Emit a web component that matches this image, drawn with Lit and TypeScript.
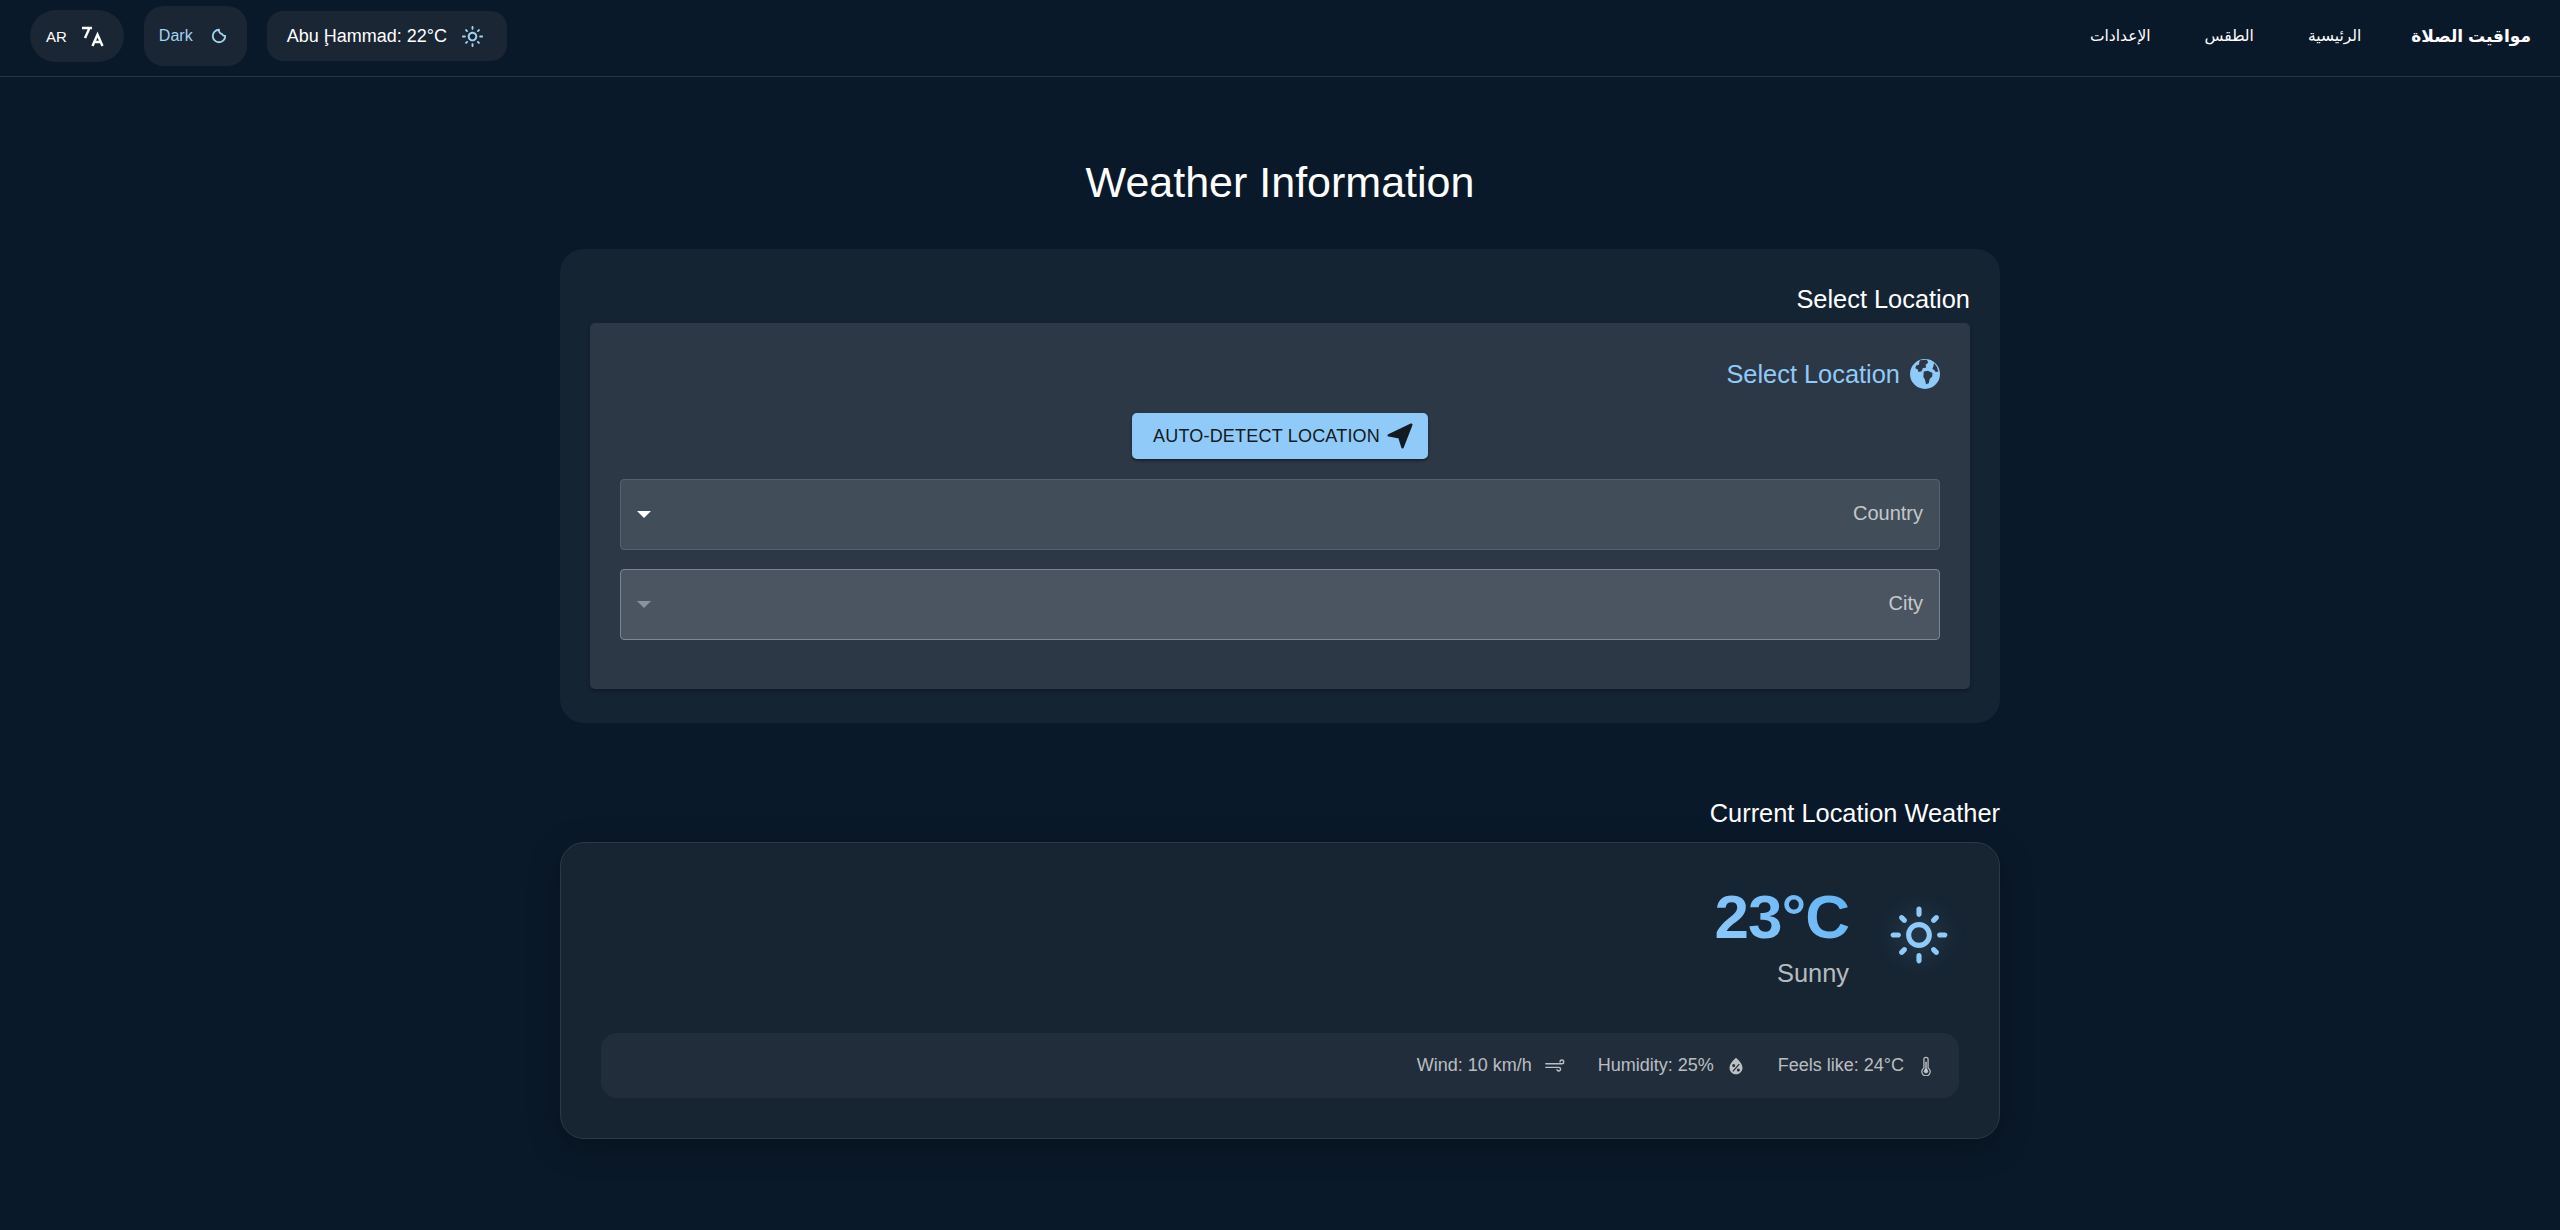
import { LitElement, html, css, svg } from "lit";
import { customElement } from "lit/decorators.js";

const icon = (d: unknown, size: number, cls = "") =>
  html`<svg class=${cls} width=${size} height=${size} viewBox="0 0 24 24" fill="currentColor">${d}</svg>`;

const translate = svg`<g fill="none" stroke="currentColor" stroke-width="2.4"><path d="M2 4h10M9.5 4 5 14"/><path d="M12.5 22 17.5 10.5 22.5 22M14.5 18h6"/></g>`;
const moon = svg`<path d="M12 4.5A7.5 7.5 0 1 0 19.5 12 4 4 0 0 1 15.6 9.6 4.4 4.4 0 0 1 12 4.5z" fill="none" stroke="currentColor" stroke-width="2.2" stroke-linejoin="round"/>`;
const sun = svg`<path d="M12 9c1.65 0 3 1.35 3 3s-1.35 3-3 3-3-1.35-3-3 1.35-3 3-3m0-2c-2.76 0-5 2.24-5 5s2.24 5 5 5 5-2.24 5-5-2.24-5-5-5M2 13h2c.55 0 1-.45 1-1s-.45-1-1-1H2c-.55 0-1 .45-1 1s.45 1 1 1m18 0h2c.55 0 1-.45 1-1s-.45-1-1-1h-2c-.55 0-1 .45-1 1s.45 1 1 1M11 2v2c0 .55.45 1 1 1s1-.45 1-1V2c0-.55-.45-1-1-1s-1 .45-1 1m0 18v2c0 .55.45 1 1 1s1-.45 1-1v-2c0-.55-.45-1-1-1s-1 .45-1 1M5.99 4.58c-.39-.39-1.03-.39-1.41 0-.39.39-.39 1.03 0 1.41l1.06 1.06c.39.39 1.03.39 1.41 0s.39-1.03 0-1.41zm12.37 12.37c-.39-.39-1.03-.39-1.41 0-.39.39-.39 1.03 0 1.41l1.06 1.06c.39.39 1.03.39 1.41 0 .39-.39.39-1.03 0-1.41zm1.06-10.96c.39-.39.39-1.03 0-1.41-.39-.39-1.03-.39-1.41 0l-1.06 1.06c-.39.39-.39 1.03 0 1.41s1.03.39 1.41 0zM7.05 18.36c.39-.39.39-1.03 0-1.41-.39-.39-1.03-.39-1.41 0l-1.06 1.06c-.39.39-.39 1.03 0 1.41s1.03.39 1.41 0z"/>`;
// solid globe, continents cut out of the disc
const globe = svg`<path fill-rule="evenodd" d="M12 2a10 10 0 1 0 0 20 10 10 0 0 0 0-20zM8.500 2.800l4.800-.3.800 2-1.700 1.400.4 1.700-2.300.6-.7 2-2.100.5-.7-1.900-1.500-.6.6-1.800 1.800-.5zM11.200 10.300l2.800-.4 3 1.500-.2 2.200-1.700 1.800-.6 2.700-1.800.7-.7-3-1.100-1.900zM18 4.600l1.900 2.500 1 3.300-1.700.3-1.200-1.500-1.100-.6.7-1.800z"/>`;
const arrow = svg`<path d="M21 3 3 11.5 11.5 13 14 21z" stroke="currentColor" stroke-width="2" stroke-linejoin="round"/>`;
const wind = svg`<g fill="none" stroke="currentColor" stroke-width="1.5" stroke-linecap="round"><path d="M2 9.5h17.5a2 2 0 1 0-2-2"/><path d="M2 13.5h14a2 2 0 1 1-1.8 2.6"/></g>`;
const drop = svg`<path fill-rule="evenodd" d="M12 2.2c-5.2 4.6-7.800 8.500-7.800 11.800C4.200 18.800 8 22 12 22s7.800-3.200 7.800-8c0-3.300-2.600-7.200-7.800-11.800zM9.200 9.600a1.800 1.800 0 1 1 0 3.600 1.800 1.800 0 0 1 0-3.600zm5.600 5.400a1.800 1.800 0 1 1 0 3.600 1.800 1.800 0 0 1 0-3.600zm.5-5.600 1.100.9-7.600 8.600-1.100-.9z"/>`;
const thermo = svg`<path d="M9.500 14.500V4a2.500 2.500 0 0 1 5 0v10.500a5 5 0 1 1-5 0z" fill="none" stroke="currentColor" stroke-width="1.500"/><circle cx="12" cy="18.300" r="2.600"/><path d="M12 17V7" stroke="currentColor" stroke-width="1.800"/>`;

@customElement("app-root")
export class AppRoot extends LitElement {
  static styles = css`
    :host {
      display: block;
      min-height: 1230px;
      background: #0a1929;
      color: #fff;
      direction: rtl;
      font-family: "Liberation Sans", "DejaVu Sans", sans-serif;
    }
    header {
      display: flex;
      align-items: center;
      justify-content: space-between;
      height: 72px;
      padding: 0 29px 4px 30px;
      border-bottom: 1px solid rgba(255, 255, 255, 0.12);
    }
    nav {
      display: flex;
      align-items: center;
      gap: 50px;
    }
    .brand {
      font-size: 17px;
      font-weight: 700;
    }
    .links {
      display: flex;
      gap: 54px;
      font-size: 15.5px;
    }
    .tools {
      display: flex;
      align-items: center;
      gap: 20px;
    }
    .pill {
      display: flex;
      align-items: center;
      background: #1a2634;
    }
    .weather-pill {
      height: 50px;
      padding: 0 23px 0 20px;
      gap: 14px;
      border-radius: 16px;
      font-size: 18px;
    }
    .weather-pill svg,
    .theme svg { color: #a0d4f0; }
    .theme {
      height: 60px;
      padding: 0 18px 0 15px;
      gap: 16px;
      border-radius: 20px;
      font-size: 16px;
      color: #a0d4f0;
    }
    .lang {
      height: 52px;
      padding: 0 20px 0 16px;
      gap: 13px;
      border-radius: 26px;
      font-size: 15px;
    }
    main {
      width: 1440px;
      margin: 0 auto;
    }
    h1 {
      margin: 0;
      padding: 79px 0 41px;
      text-align: center;
      font-size: 43px;
      line-height: 52px;
      font-weight: 400;
    }
    .card {
      background: #152433;
      border-radius: 24px;
      padding: 34px 30px;
      height: 474px;
      box-sizing: border-box;
    }
    h2 {
      margin: 0 0 8px;
      font-size: 25.4px;
      line-height: 32px;
      font-weight: 400;
      text-align: right;
    }
    .panel {
      background: #2d3846;
      border-radius: 5px;
      padding: 30px;
      height: 366px;
      box-sizing: border-box;
      box-shadow: 0 2px 4px rgba(0, 0, 0, 0.3);
    }
    .panel-title {
      display: flex;
      align-items: center;
      gap: 7px;
      margin-right: -3px;
      color: #90caf9;
      font-size: 25.4px;
      line-height: 42px;
    }
    .detect-row {
      display: flex;
      justify-content: center;
      margin: 18px 0 20px;
    }
    .detect {
      display: flex;
      align-items: center;
      gap: 5px;
      height: 46px;
      padding: 0 13px 0 21px;
      border-radius: 5px;
      background: #90caf9;
      color: #121a22;
      font-size: 18px;
      letter-spacing: 0.2px;
      box-shadow: 0 2px 3px rgba(0, 0, 0, 0.4);
    }
    .select {
      display: flex;
      align-items: center;
      justify-content: space-between;
      height: 71px;
      padding: 0 16px;
      box-sizing: border-box;
      border-radius: 4px;
      background: #424d5a;
      border: 1px solid #556070;
      color: rgba(255, 255, 255, 0.7);
      font-size: 20px;
    }
    .select span { padding-bottom: 2px; }
    .select + .select {
      margin-top: 19px;
      background: #4a5561;
      border-color: #7c8590;
    }
    .caret {
      width: 0;
      height: 0;
      border-left: 7px solid transparent;
      border-right: 7px solid transparent;
      border-top: 7px solid #fff;
    }
    .select + .select .caret { border-top-color: #8a929b; }
    .section-title {
      margin: 74px 0 13px;
    }
    .weather {
      height: 297px;
      padding: 38px 40px;
      background: #172533;
      border: 1px solid #2b3947;
      box-shadow: 0 8px 32px rgba(0, 0, 0, 0.3);
    }
    .now {
      display: flex;
      align-items: center;
      gap: 39px;
      padding-right: 9px;
    }
    .now svg {
      color: #90caf9;
      filter: drop-shadow(0 0 10px rgba(144, 202, 249, 0.25));
    }
    .temp {
      font-size: 62px;
      line-height: 72px;
      letter-spacing: -1px;
      margin-bottom: 4px;
      font-weight: 700;
      background: linear-gradient(45deg, #90caf9, #5fb3f6);
      -webkit-background-clip: text;
      background-clip: text;
      color: transparent;
    }
    .cond {
      font-size: 25.4px;
      line-height: 32px;
      color: rgba(255, 255, 255, 0.7);
    }
    .stats {
      display: flex;
      align-items: center;
      gap: 32px;
      height: 65px;
      margin-top: 44px;
      padding: 0 23px;
      border-radius: 16px;
      background: #212d3b;
      font-size: 18px;
      color: rgba(255, 255, 255, 0.7);
    }
    .stat {
      display: flex;
      align-items: center;
      gap: 12px;
    }
  `;

  render() {
    return html`
      <header>
        <nav>
          <span class="brand">مواقيت الصلاة</span>
          <div class="links">
            <span>الرئيسية</span>
            <span>الطقس</span>
            <span>الإعدادات</span>
          </div>
        </nav>
        <div class="tools">
          <div class="pill weather-pill">${icon(sun, 23)}<span>Abu Ḩammad: 22°C</span></div>
          <div class="pill theme">${icon(moon, 20)}<span>Dark</span></div>
          <div class="pill lang">${icon(translate, 24)}<span>AR</span></div>
        </div>
      </header>
      <main>
        <h1>Weather Information</h1>
        <section class="card">
          <h2>Select Location</h2>
          <div class="panel">
            <div class="panel-title">${icon(globe, 36)}<span>Select Location</span></div>
            <div class="detect-row">
              <div class="detect">${icon(arrow, 30)}<span>AUTO-DETECT LOCATION</span></div>
            </div>
            <div class="select"><span>Country</span><i class="caret"></i></div>
            <div class="select"><span>City</span><i class="caret"></i></div>
          </div>
        </section>
        <h2 class="section-title">Current Location Weather</h2>
        <section class="weather card">
          <div class="now">
            ${icon(sun, 62)}
            <div>
              <div class="temp">23°C</div>
              <div class="cond">Sunny</div>
            </div>
          </div>
          <div class="stats">
            <div class="stat">${icon(thermo, 20)}<span>Feels like: 24°C</span></div>
            <div class="stat">${icon(drop, 20)}<span>Humidity: 25%</span></div>
            <div class="stat">${icon(wind, 22)}<span>Wind: 10 km/h</span></div>
          </div>
        </section>
      </main>
    `;
  }
}
